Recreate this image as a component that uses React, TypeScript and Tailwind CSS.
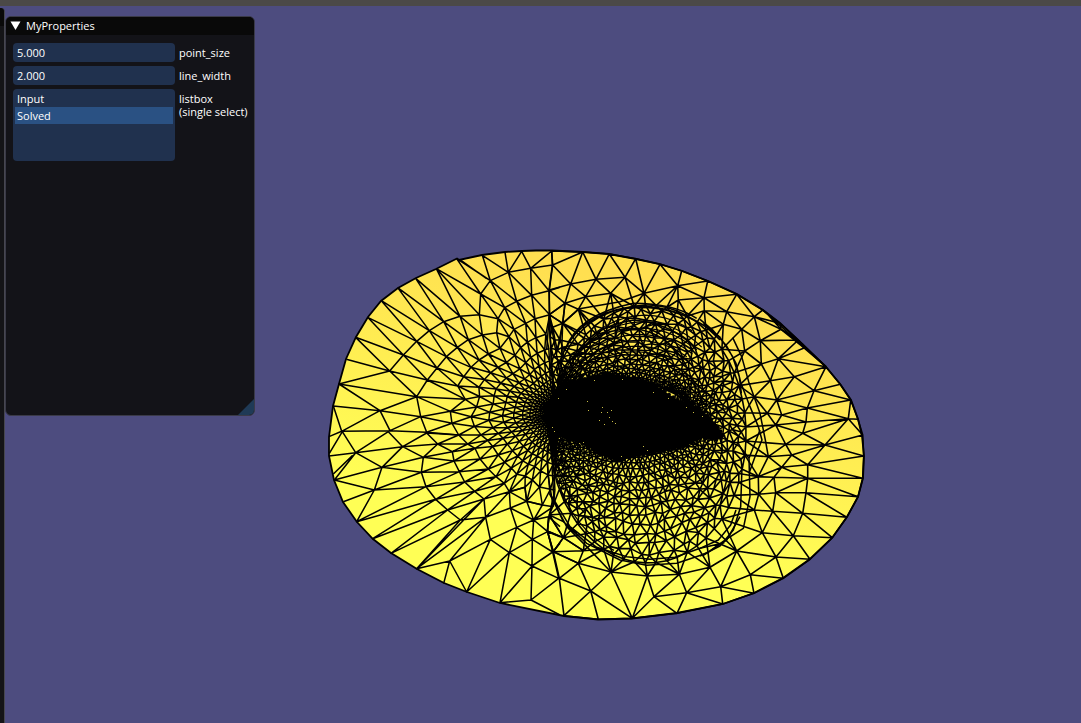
import { useState } from "react";

type Pt = [number, number];

/* ---------- mesh vertices, grouped by patch (three units per pixel) ---------- */

const patch = (ox: number, oy: number, flat: number[]): Pt[] => {
  const out: Pt[] = [];
  for (let i = 0; i < flat.length; i += 2) out.push([ox + flat[i] / 3, oy + flat[i + 1] / 3]);
  return out;
};

const outerVertices: Pt[] = [
  ...patch(540, 240, [
    35, 33, 128, 36, 208, 42, 287, 56, 360, 73, 425, 92, 503, 123, 38, 75, 92, 132, 168, 118, 255, 112, 413, 137,
    492, 173, 28, 150, 75, 190, 137, 170, 212, 160, 312, 160, 415, 180, 28, 224, 493, 212, 68, 250, 60, 300, 115, 208,
    38, 262, 30, 290, 45, 300, 34, 325, 52, 330, 68, 322, 40, 350, 58, 362, 70, 350, 34, 375, 48, 384, 66, 385, 40,
    402, 56, 408, 72, 410, 50, 425, 64, 432, 38, 430,
  ]),
  ...patch(700, 260, [
    110, 103, 188, 150, 240, 190, 295, 240, 378, 320, 421, 373, 452, 420, 474, 478, 488, 525, 80, 155, 163, 170,
    125, 208, 243, 208, 181, 242, 235, 296, 312, 264, 134, 273, 184, 312, 283, 350, 342, 392, 211, 362, 163, 410,
    322, 444, 230, 420, 445, 476, 318, 486, 308, 520, 245, 465, 227, 495, 202, 460, 70, 193,
  ]),
  ...patch(700, 430, [
    491, 78, 488, 145, 474, 200, 440, 262, 397, 323, 330, 388, 250, 445, 162, 490, 68, 522, 375, 45, 257, 43, 275,
    75, 323, 104, 245, 112, 222, 142, 323, 145, 318, 188, 227, 188, 308, 250, 218, 244, 280, 317, 187, 308, 228,
    381, 110, 363, 151, 434, 30, 412, 62, 470, 176, 193, 163, 240, 205, 80, 175, 140,
  ]),
  ...patch(540, 460, [
    72, 467, 175, 478, 277, 475, 411, 460, 58, 355, 152, 393, 342, 410, 440, 398, 40, 275, 115, 310, 213, 336, 322,
    348, 418, 343, 28, 165, 22, 213, 70, 233, 130, 272,
  ]),
];

const noise = (seed: number) => {
  const v = Math.sin(seed * 127.1 + 11.7) * 43758.5453;
  return v - Math.floor(v) - 0.5;
};

const RINGS = 15;

const ringShape = (k: number) => {
  const t = Math.pow(k / RINGS, 1.35);
  return { t, cx: 626 + 22 * t, cy: 416 + 18 * t, rx: 66 + 32 * t, ry: 34 + 95 * t };
};

/* Rings that widen from the crowded core to the rim of the two lobes. */
const ringVertices = (): Pt[] => {
  const out: Pt[] = [];
  let seed = 1;
  for (let k = 0; k <= RINGS; k++) {
    const { t, cx, cy, rx, ry } = ringShape(k);
    const h = 3 + 9.5 * t;
    const n = Math.round((Math.PI * (rx + ry)) / h);
    const wobble = k === RINGS ? 0.5 : h * 0.5;
    for (let i = 0; i < n; i++) {
      const a = ((i + (k % 2) / 2) / n) * Math.PI * 2;
      out.push([cx + rx * Math.cos(a) + noise(seed++) * wobble, cy + ry * Math.sin(a) + noise(seed++) * wobble]);
    }
  }
  return out;
};

/* Bowyer-Watson Delaunay triangulation. */
const triangulate = (input: Pt[]): number[][] => {
  const pts: Pt[] = [...input, [-9000, -9000], [12000, -9000], [600, 15000]];
  const n = input.length;
  const make = (a: number, b: number, c: number) => {
    const [ax, ay] = pts[a];
    const [bx, by] = pts[b];
    const [cx, cy] = pts[c];
    const d = 2 * (ax * (by - cy) + bx * (cy - ay) + cx * (ay - by)) || 1e-9;
    const a2 = ax * ax + ay * ay;
    const b2 = bx * bx + by * by;
    const c2 = cx * cx + cy * cy;
    const x = (a2 * (by - cy) + b2 * (cy - ay) + c2 * (ay - by)) / d;
    const y = (a2 * (cx - bx) + b2 * (ax - cx) + c2 * (bx - ax)) / d;
    return { v: [a, b, c], x, y, r: (ax - x) ** 2 + (ay - y) ** 2 };
  };
  let tris = [make(n, n + 1, n + 2)];
  for (let i = 0; i < n; i++) {
    const [px, py] = pts[i];
    const edges = new Map<string, number[]>();
    const keep: typeof tris = [];
    for (const t of tris) {
      if ((px - t.x) ** 2 + (py - t.y) ** 2 < t.r) {
        for (let e = 0; e < 3; e++) {
          const p = t.v[e];
          const q = t.v[(e + 1) % 3];
          const key = p < q ? p + "_" + q : q + "_" + p;
          if (edges.has(key)) edges.delete(key);
          else edges.set(key, [p, q]);
        }
      } else keep.push(t);
    }
    edges.forEach(([p, q]) => keep.push(make(p, q, i)));
    tris = keep;
  }
  return tris.filter((t) => t.v.every((v) => v < n)).map((t) => t.v);
};

const fmt = (p: Pt) => p[0].toFixed(1) + " " + p[1].toFixed(1);

const lobePath = (() => {
  const pts = [...outerVertices, ...ringVertices()];
  /* Triangles stretch sideways near the right rim. */
  const metric = pts.map(([x, y]): Pt => [x > 765 ? 765 + (x - 765) * 0.55 : x, y]);
  return triangulate(metric)
    .map((t) => t.map((i) => pts[i]))
    .filter(([a, b, c]) => {
      const mid = (a[0] + b[0] + c[0]) / 3;
      const longest = Math.max(
        Math.hypot(a[0] - b[0], a[1] - b[1]),
        Math.hypot(b[0] - c[0], b[1] - c[1]),
        Math.hypot(c[0] - a[0], c[1] - a[1]),
      );
      const area = Math.abs((b[0] - a[0]) * (c[1] - a[1]) - (c[0] - a[0]) * (b[1] - a[1])) / 2;
      return mid > 549 && !(mid < 580 && longest > 26 && area / longest ** 2 < 0.13);
    })
    .map(([a, b, c]) => "M" + fmt(a) + "L" + fmt(b) + "L" + fmt(c) + "Z")
    .join("");
})();

/* Contour strands that run round the lobes, from one angle (in degrees) to another. */
const strand = (k: number, from: number, to: number) => {
  const { cx, cy, rx, ry } = ringShape(k);
  const pts: Pt[] = [];
  for (let a = from; a <= to; a += 6) {
    const r = (a * Math.PI) / 180;
    pts.push([cx + rx * Math.cos(r), cy + ry * Math.sin(r)]);
  }
  return "M" + pts.map(fmt).join("L");
};

const strandPath = [
  strand(13.5, 150, 300),
  strand(12.5, 130, 312),
  strand(11.5, 160, 306),
  strand(10.5, 140, 312),
  strand(9.5, 180, 306),
  strand(8.5, 150, 306),
  strand(7.5, 190, 300),
  strand(14.5, 110, 220),
].join("");

/* Left fan: each ring is pulled towards the core and shifted by half a step. */
const fanPath = (() => {
  const focus: Pt = [562, 414];
  let ring = patch(320, 240, [
    689, 224, 645, 236, 617, 250, 582, 268, 567, 290, 540, 325, 505, 342, 477, 360, 453, 382, 431, 410, 413, 438,
    436, 478, 391, 514, 396, 550, 416, 585, 443, 612, 465, 625, 480, 657, 505, 687, 528, 710, 553, 730, 568, 755,
    615, 742, 620, 784, 667, 795, 700, 800,
  ]);
  let d = "M" + ring.map(fmt).join("L");
  for (let k = 0; k < 11; k++) {
    const s = 0.82;
    const next: Pt[] = ring.map((p, i) => {
      const q = ring[Math.max(0, Math.min(ring.length - 1, k % 2 ? i - 1 : i + 1))];
      const mx = (p[0] + q[0]) / 2;
      const my = (p[1] + q[1]) / 2;
      return [focus[0] + (mx - focus[0]) * s, focus[1] + (my - focus[1]) * s];
    });
    d += "M" + next.map(fmt).join("L");
    next.forEach((p, i) => {
      const q = ring[Math.max(0, Math.min(ring.length - 1, k % 2 ? i - 1 : i + 1))];
      d += "M" + fmt(ring[i]) + "L" + fmt(p) + "L" + fmt(q);
    });
    ring = next;
  }
  return d;
})();

const upperLeft =
  "M410 56L482 162M410 56L511 122M418 60L511 122M424 62L500 116M487 46L511 122M487 46L565 97M555 37L565 97M605 34L565 97M605 34L632 85M695 33L632 85M695 33L697 75" +
  "M511 122L565 97L632 85L697 75M349 86L482 162M349 86L478 224M349 86L420 229M287 115L420 229M287 115L371 245M233 143L371 245M233 143L328 272" +
  "M184 182L328 272M184 182L290 304M143 232L290 304M143 232L250 345M107 292L250 345M107 292L209 393M79 358L209 393L57 432L290 470M57 432L180 512L40 498L65 574L180 512" +
  "M27 590L65 574L210 572L180 512L302 530M180 512L290 470L209 393M302 530L210 572M320 577L210 572" +
  "M511 122L482 162L478 224L420 229L371 245L328 272L290 304L250 345L209 393" +
  "M687 152L635 166L590 184L554 203L534 236L530 278L487 285L445 299L412 322L379 350L351 384L322 420L290 470L302 530L320 577" +
  "M697 75L687 152L689 224M632 85L687 152M632 85L635 166L565 97L590 184L511 122L554 203L482 162L534 236L478 224L487 285L420 229L445 299L371 245L412 322L328 272L379 350L290 304L351 384L250 345L322 420L209 393" +
  "M687 152L720 142M635 166L689 224M635 166L645 236L590 184L617 250L554 203L582 268L534 236L567 290L530 278M530 278L540 325L487 285L505 342L445 299L477 360L412 322L453 382L379 350L431 410L351 384L413 438L322 420L436 478L290 470L391 514L302 530L396 550L320 577L416 585";

const lowerLeft =
  "M320 9L248 50M67 5L107 68L27 78M107 68L205 5L248 50L107 68L186 112L43 150L107 68M98 76L40 132M43 150L163 180L186 112L248 50M186 112L304 127M186 112L310 82L248 50" +
  "M70 215L163 180L110 275M163 180L304 127M163 180L318 170L110 275L347 208L158 326L383 240L213 370L421 270L290 416L497 262M290 416L492 207M290 416L389 393L371 460M389 393L440 486M389 393L497 262M389 393L511 328L440 486L568 368L540 518L636 408M540 518L633 510L720 555" +
  "M633 510L636 408L716 445L633 510M511 328L497 262M511 328L590 292L568 368L511 328M568 368L637 328M568 368L636 408L637 328L590 292L571 234M590 292L641 270L571 234L497 262L568 185M497 262L492 207L421 270L497 262" +
  "M492 207L383 240L464 184L347 208L434 156L318 170L418 125L304 127L402 93L310 82L397 65L353 42L248 50M310 82L353 42L320 9L416 15L353 42L443 42L397 65M304 127L310 82M304 127L318 170L347 208L383 240L421 270" +
  "M397 65L402 93L418 125L434 156L464 184L492 207M397 65L465 55L402 93L480 87L418 125L505 117L434 156L528 140L464 184L553 160L492 207L568 185L571 234L620 214L568 185L615 172L620 214L641 270L667 225L620 214" +
  "M641 270L637 328L683 305L641 270L685 260L683 305L698 366L637 328M698 366L636 408M698 366L716 445M67 5L28 70M697 232L641 270M685 260L720 290M683 305L720 320M698 366L720 340";

const outline =
  "M329 437L333 406L339 384L346 359L356 337L368 317L381 301L398 288L416 278L436 269L457 258.500L459 260L482 255L505 252L522 251L536 250.500L552 250.500L583 252L609 254L636 259L660 264L682 271L708 281L737 294L763 310L780 323L798 340L826 367L840 384L851 400L858 419L862 436L864 456L863 478L858 497L847 517L832 538L810 559L783 578L754 593L723 604L677 613L632 618.500L598 619.500L564 616L500 603L467 592L444 583L417 569L391 553L373 539L357 522L343 502L334 480L329 456Z";

const core =
  "M549 437L546 420L552 398L562 382L584 379L606 373L636 378L660 388L676 399L692 404L704 412L716 424L724 436L716 440L702 438L684 447L660 452L640 456L618 461L600 455L584 443L562 436Z";

const specks: number[] = [
  587, 401, 588, 410, 601, 412, 607, 412, 609, 417, 612, 421, 604, 424, 615, 423, 599, 420, 611, 410, 602, 407, 579,
  443, 583, 442, 594, 380, 622, 379, 653, 392, 668, 398, 686, 407, 693, 412, 702, 416, 643, 446, 647, 450, 621, 456,
  566, 389, 558, 398, 552, 427, 554, 431, 716, 423,
];

const Mesh = () => (
  <svg
    className="absolute inset-0 h-full w-full"
    viewBox="0 0 1081 723"
    preserveAspectRatio="xMinYMin slice"
    role="img"
    aria-label="Solved triangle mesh"
  >
    <defs>
      <linearGradient id="surface" gradientUnits="userSpaceOnUse" x1="700" y1="300" x2="640" y2="550">
        <stop offset="0" stopColor="#ffdf50" />
        <stop offset="0.5" stopColor="#ffee52" />
        <stop offset="1" stopColor="#ffff55" />
      </linearGradient>
    </defs>
    <path d={outline} fill="url(#surface)" stroke="#000" strokeWidth="1.8" />
    <g fill="none" stroke="#000" strokeLinejoin="round">
      <path d={lobePath} strokeWidth="1.6" />
      <path d={strandPath} strokeWidth="1.2" />
      <path d={fanPath} strokeWidth="1.5" />
      <g strokeWidth="4.6">
        <path transform="translate(320 240) scale(.33333)" d={upperLeft} />
        <path transform="translate(320 430) scale(.33333)" d={lowerLeft} />
        <path
          transform="translate(540 240) scale(.33333)"
          d="M28 224L20 330M28 224L45 320L60 400M28 224L68 250L50 340M75 190L68 250L62 420M68 250L115 208M28 224L75 190M28 224L35 400M50 400Q90 215 300 197Q440 205 540 292M60 380Q110 240 240 208Q380 185 500 262L540 300M75 330Q110 225 280 190Q400 190 470 235M110 208L240 185L312 160M120 330Q160 260 280 240Q400 250 470 330M90 380Q140 270 280 265Q390 280 440 380"
        />
        <path
          transform="translate(700 260) scale(.33333)"
          d="M0 178L40 212L80 258L108 310L123 370L150 440L175 500L186 540L165 590L147 640M10 190L60 232L98 290L118 350L124 400M98 233L125 290L146 365L180 460L196 540L205 590M188 150L378 320M200 160L243 208L312 264M243 208L310 255"
        />
        <path
          transform="translate(700 430) scale(.33333)"
          d="M0 378L60 348L100 300L122 230L126 110M0 355L55 330L92 285L108 240M8 378L75 330L130 295L150 200L147 85L180 0M147 85L120 50L60 20"
        />
        <path
          transform="translate(540 460) scale(.33333)"
          d="M22 -40L22 10L30 100L70 185L140 250L240 300L320 316L410 310L500 280L560 240L600 170M36 20L42 120L90 200L170 262L260 290L330 298L405 292L480 265L553 248M28 100L80 200L140 260L213 336M28 165L40 110M28 165L70 185M22 213L28 165M22 213L70 233L130 272M22 213L40 275L70 233L28 165M40 275L115 310"
        />
      </g>
    </g>
    <path d={core} fill="#000" stroke="#000" strokeWidth="3" strokeLinejoin="round" strokeDasharray="3 2" />
    <g fill="#c9bd45">
      {specks.map((x, i) => (i % 2 ? null : <rect key={i} x={x} y={specks[i + 1]} width="1" height="1" />))}
    </g>
  </svg>
);

const fieldClass =
  "h-[19px] w-[162px] shrink-0 rounded-[4px] bg-[#20314e] px-1 text-[11px] leading-4 text-white outline-none";

const Field = ({ id, initial }: { id: string; initial: string }) => {
  const [value, setValue] = useState(initial);
  return (
    <div className="flex items-center gap-1">
      <input id={id} className={fieldClass} value={value} onChange={(e) => setValue(e.target.value)} />
      <label htmlFor={id} className="leading-[19px]">
        {id}
      </label>
    </div>
  );
};

export default function App() {
  const [selected, setSelected] = useState("Solved");
  return (
    <div className="flex h-screen flex-col overflow-hidden bg-[#4d4c7f] font-['Open_Sans','Noto_Sans',sans-serif] text-[11px] text-white">
      <main className="flex-1">
        <Mesh />
        <div className="relative h-[6px] bg-[#4b4947]" />
        <div className="absolute top-2 bottom-0 left-0 w-[5px] rounded-tr-[4px] border-r border-[#47474f] bg-[#141417]">
          <div className="h-[18px] rounded-tr-[4px] bg-[#090909]" />
        </div>
        <section
          aria-labelledby="panel-title"
          className="absolute top-4 left-[5px] h-[400px] w-[250px] overflow-hidden rounded-[6px] border border-[#3a3a48] bg-[#131318]"
        >
          <header className="flex h-[18px] items-center gap-[5px] bg-[#090909] pl-1">
            <button type="button" aria-label="Collapse" className="h-[10px] w-[11px]">
              <svg viewBox="0 0 11 10" className="h-[10px] w-[11px]">
                <path d="M.5 .5H10.500L5.500 9Z" fill="#fff" />
              </svg>
            </button>
            <h1 id="panel-title">MyProperties</h1>
          </header>
          <div className="flex flex-col gap-1 px-[7px] pt-2">
            <Field id="point_size" initial="5.000" />
            <Field id="line_width" initial="2.000" />
            <div className="flex gap-1">
              <div
                role="listbox"
                aria-labelledby="listbox-label"
                className="flex h-[72px] w-[162px] shrink-0 flex-col rounded-[4px] bg-[#20314e] px-[2px] pt-px"
              >
                {["Input", "Solved"].map((name) => (
                  <button
                    key={name}
                    type="button"
                    role="option"
                    aria-selected={selected === name}
                    onClick={() => setSelected(name)}
                    className={
                      selected === name
                        ? "h-[17px] bg-[#2a5183] px-[2px] text-left leading-[17px]"
                        : "h-[17px] px-[2px] text-left leading-[17px]"
                    }
                  >
                    {name}
                  </button>
                ))}
              </div>
              <div id="listbox-label" className="pt-[3px] leading-[13px] whitespace-nowrap">
                listbox
                <br />
                (single select)
              </div>
            </div>
          </div>
          <svg viewBox="0 0 16 16" className="absolute right-0 bottom-0 h-4 w-4">
            <path d="M16 0V16H0Z" fill="#1f3a56" />
          </svg>
        </section>
      </main>
    </div>
  );
}
